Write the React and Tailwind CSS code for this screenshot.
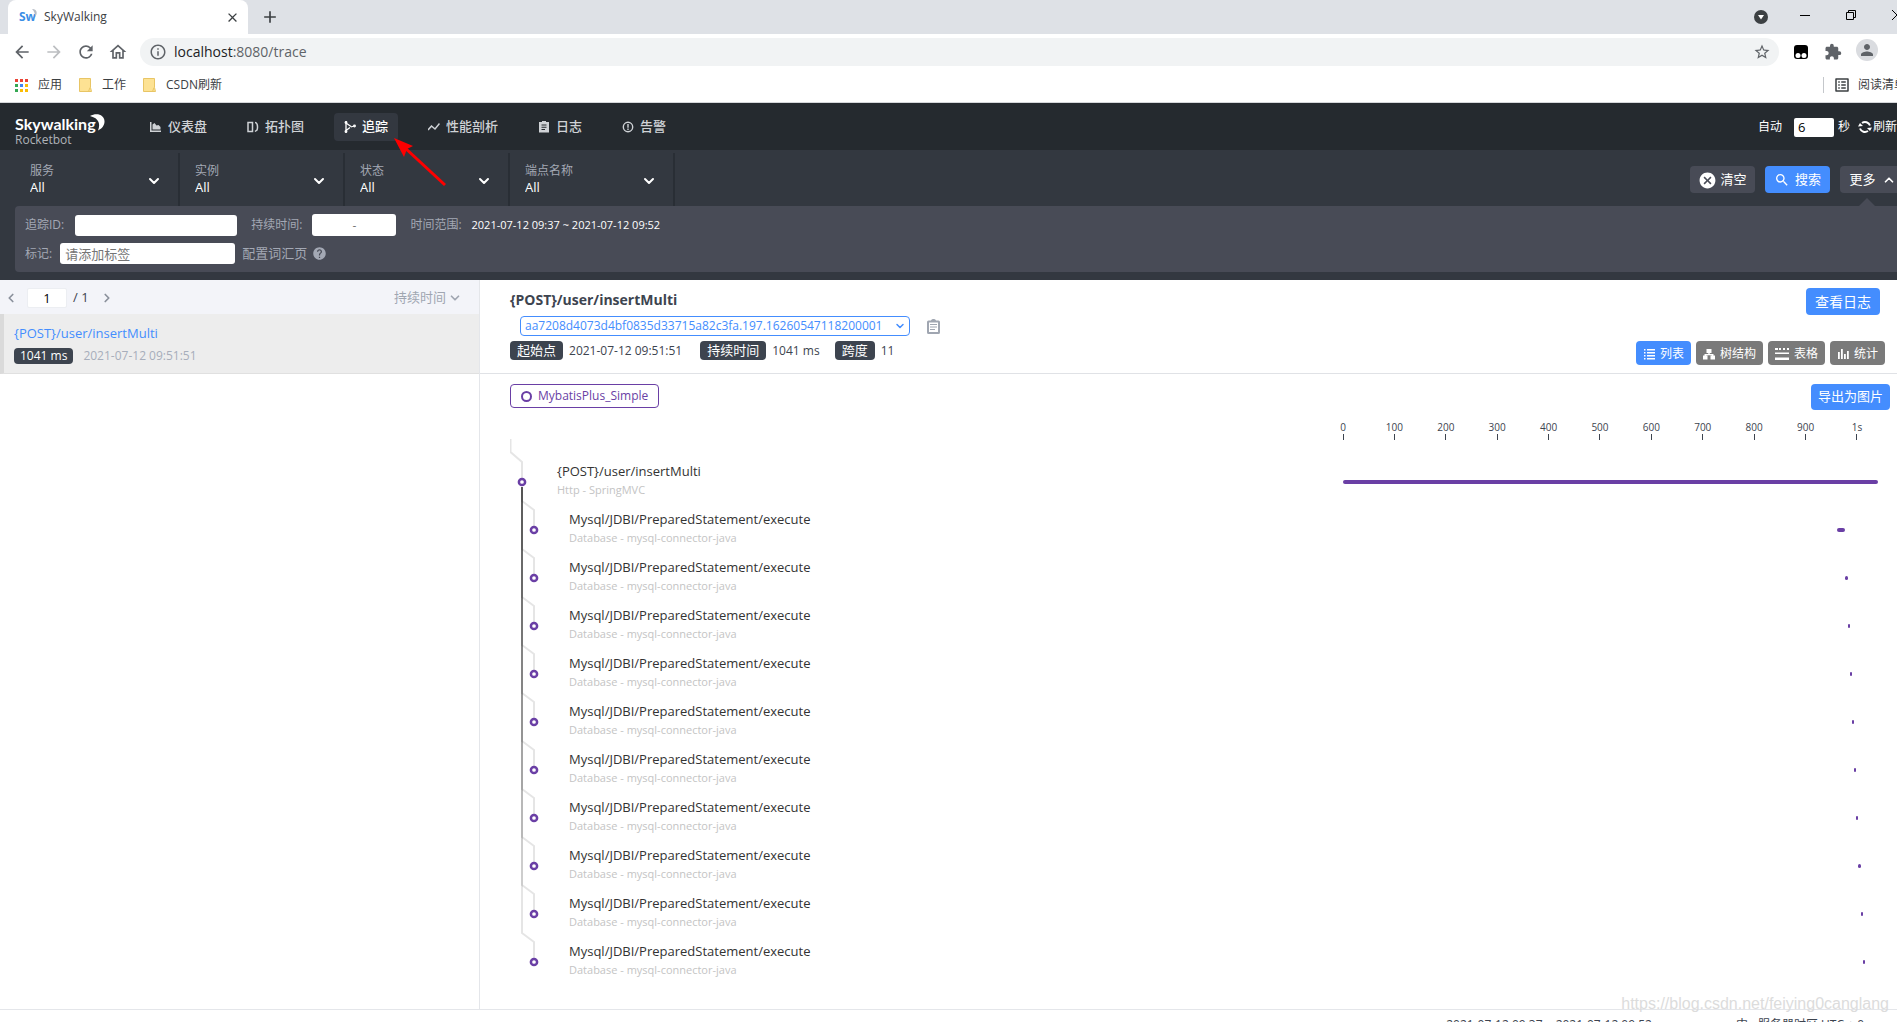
import { MdArrowBack, MdArrowForward, MdRefresh, MdOutlineHome, MdInfoOutline, MdStarBorder, MdExtension, MdPerson, MdAdd, MdClose, MdSearch, MdHelp, MdCancel, MdOutlineListAlt } from "react-icons/md";
import { ChevronDown, ChevronLeft, ChevronRight, ChevronUp } from "lucide-react";

const ROW = 48;
const TOTAL_MS = 1041;

const spans = [
  { name: "{POST}/user/insertMulti", layer: "Http - SpringMVC", start: 0, ms: 1041 },
  ...[[961, 15], [977, 5], [982, 5], [986, 5], [990, 5], [994, 5], [998, 5], [1003, 5], [1007, 5], [1011, 5]].map(([start, ms]) => ({
    name: "Mysql/JDBI/PreparedStatement/execute",
    layer: "Database - mysql-connector-java",
    start,
    ms,
    child: true,
  })),
];

const ticks = ["0", "100", "200", "300", "400", "500", "600", "700", "800", "900", "1s"];

const navItems = [
  { label: "仪表盘", icon: <path d="M0 1h1.500v8.500H11V11H0zM2.500 8.500V3.500l2-1.500 2 2.500 2-.5 2 2v2.500z" /> },
  { label: "拓扑图", icon: <path d="M1 1.500h4.500v9H1zM8 1.500c1 0 1.500.5 2 1.500.7 2 .7 4 0 6l-2 1.500" fill="none" stroke="currentColor" strokeWidth="1.500" /> },
  { label: "追踪", active: true, icon: <g fill="none" stroke="currentColor" strokeWidth="1.300"><path d="M2 0v12M2 2l5 3.500M7 6l3-1M2 9.500l4-3" /><circle cx="2" cy="1.500" r=".8" /><circle cx="2" cy="10.500" r=".8" /><circle cx="10.500" cy="5" r=".8" /></g> },
  { label: "性能剖析", icon: <path d="M0 9l3.500-4L7 8l4.500-5.500" fill="none" stroke="currentColor" strokeWidth="1.500" /> },
  { label: "日志", icon: <path fillRule="evenodd" d="M1 1H4V0h4v1h3v10.500H1zM3.500 3.500v1h5v-1zm0 2.300v1h5v-1zm0 2.300v1H7v-1z" /> },
  { label: "告警", icon: <g><circle cx="6" cy="6" r="4.700" fill="none" stroke="currentColor" strokeWidth="1.400" /><path d="M5.300 3h1.400v3.700H5.300zM5.300 7.500h1.400v1.400H5.300z" /></g> },
];

const views = [
  { label: "列表", active: true, icon: <path d="M1 1h1.500v1.500H1zM4 1h8v1.500H4zM1 4h1.500v1.500H1zM4 4h8v1.500H4zM1 7h1.500v1.500H1zM4 7h8v1.500H4zM1 10h1.500v1.500H1zM4 10h8v1.500H4z" /> },
  { label: "树结构", icon: <path d="M3.500 1h5v4H6.700v1h3.800v1.500H12V11.500H7.500v-4H9V7.200H3v.3h1.500v4H0v-4h1.500V6h3.800V5H3.500z" /> },
  { label: "表格", wide: true, icon: <path d="M0 0h3v2H0zM4 0h2v2H4zM8 0h2v2H8zM12 0h2v2h-2zM0 4.500h14V6H0zM0 9.500h14V12H0z" /> },
  { label: "统计", icon: <path d="M1 4h1.800v7H1zM4 1h1.800v10H4zM7 6h1.800v5H7zM10 3h1.800v8H10z" /> },
];

function Selector({ id, label }) {
  return (
    <div className="relative w-[165px] h-[53px] border-r-2 border-[#292e35] pl-[15px] pt-2 flex flex-col">
      <label htmlFor={id} className="text-xs leading-5 text-[#a3a8b4]">{label}</label>
      <select id={id} className="appearance-none w-full text-[13px] leading-3 h-3 text-white bg-transparent outline-none">
        <option>All</option>
      </select>
      <ChevronDown className="absolute right-4 top-5 pointer-events-none text-white" size={16} strokeWidth={3} />
    </div>
  );
}

function Badge({ children }) {
  return <span className="rounded bg-[#3d444f] text-white px-[7px] text-[13px] leading-[19px]">{children}</span>;
}

function Folder() {
  return (
    <svg width="13" height="14" viewBox="0 0 13 14">
      <path d="M.5.5h11v9l1 4h-12z" fill="#fde293" stroke="#e8c565" />
      <path d="M9.500 13.500l1.500-4" stroke="#e8c565" />
    </svg>
  );
}

function BrowserChrome() {
  return (
    <div className="text-[#3c4043]">
      <div className="h-[34px] bg-[#dee1e6] flex items-center pl-2">
        <div className="w-60 h-full bg-white rounded-t-lg flex items-center pl-[11px] pr-2">
          <span className="relative w-[17px] text-xs font-bold text-[#3a8ee6]">
            Sw
            <svg className="absolute left-[13px] top-0" width="5" height="8" viewBox="0 0 5 8"><path d="M0 0c5 0 6 4 3 8 0-4-1-6-3-8z" fill="#b7bdc6" /></svg>
          </span>
          <span className="ml-2 text-xs flex-1">SkyWalking</span>
          <button aria-label="关闭标签页"><MdClose size={15} /></button>
        </div>
        <button aria-label="新标签页" className="ml-3"><MdAdd size={20} /></button>
        <div className="ml-auto flex items-center text-black pr-[18px]">
          <svg width="14" height="14" viewBox="0 0 14 14"><circle cx="7" cy="7" r="7" fill="#3c4043" /><path d="M4 5h6L7 9.500z" fill="#fff" /></svg>
          <button aria-label="最小化" className="ml-8 mb-1"><svg width="11" height="11" viewBox="0 0 11 11"><path d="M0 5.500h10" stroke="currentColor" /></svg></button>
          <button aria-label="还原" className="ml-[35px] mb-1"><svg width="11" height="11" viewBox="0 0 11 11" fill="none" stroke="currentColor"><path d="M.5 2.500h7v7h-7zM2.500 2.500v-2h7v7h-2" /></svg></button>
          <button aria-label="关闭" className="ml-[35px] mb-1"><svg width="11" height="11" viewBox="0 0 11 11"><path d="M0 0l10 10M10 0L0 10" stroke="currentColor" /></svg></button>
        </div>
      </div>
      <div className="h-[34px] bg-white flex items-center pl-3 pt-[2px] text-[#5f6368]">
        <button aria-label="后退"><MdArrowBack size={20} /></button>
        <button aria-label="前进" className="ml-3 text-[#bcbec1]"><MdArrowForward size={20} /></button>
        <button aria-label="重新加载" className="ml-3"><MdRefresh size={20} /></button>
        <button aria-label="主页" className="ml-3"><MdOutlineHome size={20} /></button>
        <div className="ml-3 h-7 flex-1 rounded-full bg-[#f1f3f4] flex items-center pl-[9px] pr-2">
          <MdInfoOutline size={18} />
          <span className="ml-[7px] text-sm"><span className="text-[#202124]">localhost</span>:8080/trace</span>
          <button aria-label="收藏" className="ml-auto"><MdStarBorder size={18} /></button>
        </div>
        <svg className="ml-[15px]" width="14" height="14" viewBox="0 0 14 14"><rect width="14" height="14" rx="3" fill="#000" /><circle cx="4" cy="10.500" r="2.500" fill="#fff" /><circle cx="10" cy="10.500" r="2.500" fill="#fff" /></svg>
        <MdExtension className="ml-4" size={18} />
        <span className="ml-[14px] mr-[43px] mb-1 w-[22px] h-[22px] rounded-full bg-[#dadce0] flex items-center justify-center"><MdPerson size={18} /></span>
      </div>
      <div className="h-[35px] bg-white border-b border-[#d5d7da] flex items-center pl-[15px] text-xs">
        <svg width="13" height="13" viewBox="0 0 13 13">
          {["#ea4335", "#34a853", "#34a853"].map((c, i) => <rect key={i} x="0" y={i * 5} width="3" height="3" fill={c} />)}
          {["#ea4335", "#4285f4", "#fbbc05"].map((c, i) => <rect key={i} x="5" y={i * 5} width="3" height="3" fill={c} />)}
          {["#ea4335", "#fbbc05", "#fbbc05"].map((c, i) => <rect key={i} x="10" y={i * 5} width="3" height="3" fill={c} />)}
        </svg>
        <a href="#apps" className="ml-[10px]">应用</a>
        <a href="#work" className="ml-[17px] flex items-center gap-[10px]"><Folder />工作</a>
        <a href="#csdn" className="ml-[17px] flex items-center gap-[10px]"><Folder />CSDN刷新</a>
        <a href="#reading" className="ml-auto mr-[15px] h-4 border-l border-[#c4c7cb] pl-[9px] flex items-center gap-[7px] whitespace-nowrap">
          <MdOutlineListAlt size={18} />阅读清单
        </a>
      </div>
    </div>
  );
}

function Header() {
  return (
    <header className="h-[47px] bg-[#252a2f] flex items-center pl-[15px] pt-px text-[#cfd2d6]">
      <div className="relative w-[125px] pt-2">
        <div className="font-['Lato'] font-bold text-base leading-[18px] text-white">Skywalking</div>
        <svg className="absolute left-[75px] top-[7px]" width="15" height="17" viewBox="0 0 15 17"><path d="M0 2C7-2 15 1 14.500 8c-.3 4-3 7-6.500 8.500C11 9 8 4 0 2z" fill="#fff" /></svg>
        <div className="text-xs leading-[14px] text-[#b0b4b9]">Rocketbot</div>
      </div>
      <nav className="flex gap-5">
        {navItems.map((item) => (
          <a key={item.label} href="#nav" className={`h-7 px-[10px] rounded flex items-center gap-[6px] text-[13px] font-medium ${item.active ? "bg-[#333840] text-white" : ""}`}>
            <svg width="12" height="12" viewBox="0 0 12 12" fill="currentColor">{item.icon}</svg>
            {item.label}
          </a>
        ))}
      </nav>
      <div className="ml-auto mr-6 flex items-center text-xs text-white whitespace-nowrap">
        <label htmlFor="interval">自动</label>
        <input id="interval" defaultValue="6" className="ml-3 w-10 h-[19px] rounded-xs bg-white text-black text-[13px] px-1 outline-none" />
        <span className="ml-1">秒</span>
        <button className="ml-2 flex items-center gap-px">
          <svg width="14" height="14" viewBox="0 0 14 14" fill="none" stroke="currentColor" strokeWidth="2">
            <path d="M12 5.500A5.300 5.300 0 0 0 4 3M2 8.500A5.300 5.300 0 0 0 10 11" />
            <path d="M0 6.500l2-3.500 3 3zM14 7.500l-2 3.500-3-3z" fill="currentColor" stroke="none" />
          </svg>
          刷新
        </button>
      </div>
    </header>
  );
}

function Filters() {
  const label = "text-[#a3a8b4]";
  return (
    <section className="bg-[#333840] pt-[3px] pb-2 text-xs">
      <div className="flex items-start pl-[15px]">
        <Selector id="service" label="服务" />
        <Selector id="instance" label="实例" />
        <Selector id="status" label="状态" />
        <Selector id="endpoint" label="端点名称" />
        <div className="ml-auto mr-4 mt-[13px] flex gap-[10px] text-[13px] text-white">
          <button className="w-[65px] h-[27px] pt-px rounded bg-[#484b56] flex items-center justify-center gap-[3px]"><MdCancel size={19} />清空</button>
          <button className="w-[65px] h-[27px] pt-px rounded bg-[#448dfe] flex items-center justify-center gap-[5px]"><MdSearch size={16} />搜索</button>
          <button className="relative w-[65px] h-[27px] pt-px rounded bg-[#484b56] flex items-center justify-center gap-[6px]">
            更多<ChevronUp size={14} strokeWidth={3} />
            <svg className="absolute left-[19px] top-8" width="16" height="8" viewBox="0 0 16 8"><path d="M0 8l8-8 8 8z" fill="#484b56" /></svg>
          </button>
        </div>
      </div>
      <div className="ml-[15px] mr-4 rounded-sm bg-[#484b56] h-[66px] pt-2 px-[10px]">
        <div className="flex items-center h-[22px]">
          <label htmlFor="traceId" className={label}>追踪ID:</label>
          <input id="traceId" className="ml-[11px] w-[162px] h-[21px] rounded-[3px] bg-white outline-none px-1" />
          <label htmlFor="duration" className={`ml-[14px] ${label}`}>持续时间:</label>
          <input id="duration" defaultValue="-" className="ml-[10px] w-[84px] h-[22px] rounded-[3px] bg-white text-[#777] text-center outline-none" />
          <span className={`ml-[14px] ${label}`}>时间范围:</span>
          <span className="ml-[10px] text-[11px] text-white">2021-07-12 09:37 ~ 2021-07-12 09:52</span>
        </div>
        <div className="flex items-center h-[21px] mt-[7px]">
          <label htmlFor="tags" className={label}>标记:</label>
          <input id="tags" placeholder="请添加标签" className="ml-2 w-[175px] h-[21px] rounded-[3px] bg-white text-[13px] placeholder:text-[#757575] outline-none px-[5px]" />
          <a href="#vocab" className={`ml-[7px] flex items-center gap-[5px] text-[13px] ${label}`}>配置词汇页<MdHelp size={15} /></a>
        </div>
      </div>
    </section>
  );
}

function TraceList() {
  return (
    <aside className="w-[480px] shrink-0 border-r border-[#e4e6ea]">
      <div className="h-[34px] bg-[#f3f4f9] flex items-center px-1 pt-px text-[13px]">
        <button aria-label="上一页"><ChevronLeft size={14} strokeWidth={3} className="text-[#8b919c]" /></button>
        <input aria-label="页码" defaultValue="1" className="ml-[9px] w-10 h-5 rounded-xs border border-[#eceef2] bg-white text-center outline-none" />
        <span className="ml-[6px] text-[#3d444f]">/ 1</span>
        <button aria-label="下一页" className="ml-[11px]"><ChevronRight size={14} strokeWidth={3} className="text-[#8b919c]" /></button>
        <button className="ml-auto mr-[13px] flex items-center gap-[2px] text-[#a0a6b1]">持续时间<ChevronDown size={14} strokeWidth={3} /></button>
      </div>
      <div className="h-[60px] bg-[#ededed] border-l-4 border-l-[#dadada] border-b border-b-[#e0e0e0] pl-[10px] pt-[9px]">
        <a href="#trace" className="block text-[13px] leading-5 text-[#448dfe]">{"{POST}/user/insertMulti"}</a>
        <div className="mt-[5px] flex items-center text-xs">
          <span className="rounded bg-[#3d444f] text-white px-[6px] leading-4">1041 ms</span>
          <span className="ml-[10px] leading-4 text-[#a7aebb]">2021-07-12 09:51:51</span>
        </div>
      </div>
    </aside>
  );
}

function SpanTree() {
  // every child draws its own line down from the root, so the shared trunk gets darker upwards
  return (
    <svg className="absolute left-0 top-0 pointer-events-none" width="40" height={ROW * spans.length + 20} fill="none">
      {spans.map((s, i) => {
        const y = 43 + i * ROW;
        return s.child
          ? <path key={i} d={`M12 48V${y - 29}L24 ${y - 20}V${y - 4}`} stroke="#000" strokeOpacity=".1" strokeWidth="2" />
          : <path key={i} d="M0.500 0V13L12 23V39" stroke="#000" strokeOpacity=".1" strokeWidth="2" />;
      })}
      {spans.map((s, i) => (
        <circle key={i} cx={s.child ? 24 : 12} cy={43 + i * ROW} r="3.100" fill="#fff" stroke="#6a3fa5" strokeWidth="2.500" />
      ))}
    </svg>
  );
}

function TraceDetail() {
  return (
    <main className="flex-1 min-w-0">
      <div className="h-[94px] border-b border-[#e0e2e6] pl-[30px] pt-2 flex justify-between">
        <div>
          <h5 className="text-sm leading-6 font-bold text-[#3d444f]">{"{POST}/user/insertMulti"}</h5>
          <div className="ml-[10px] mt-1 h-5 flex items-center">
            <div className="relative flex">
              <select aria-label="追踪ID" className="appearance-none w-[390px] h-5 rounded border border-[#448dfe] text-[#448dfe] text-xs pl-1 bg-white outline-none">
                <option>aa7208d4073d4bf0835d33715a82c3fa.197.16260547118200001</option>
              </select>
              <ChevronDown className="absolute right-1 top-1 pointer-events-none text-[#448dfe]" size={12} strokeWidth={3} />
            </div>
            <button aria-label="复制" className="ml-[17px] text-[#a0a6b1]">
              <svg width="13" height="15" viewBox="0 0 13 15"><path fill="currentColor" fillRule="evenodd" d="M1.500 1.500H4C4.500-.5 8.500-.5 9 1.500h2.500A1.500 1.500 0 0 1 13 3v10.500a1.500 1.500 0 0 1-1.500 1.500h-10A1.500 1.500 0 0 1 0 13.500V3a1.500 1.500 0 0 1 1.500-1.500zM2 3.500v9.500h9V3.500zM3 5h7v1H3zm0 2.500h7v1H3zM3 10h5v1H3z" /></svg>
            </button>
          </div>
          <div className="mt-[5px] flex items-center text-xs text-[#3d444f]">
            <Badge>起始点</Badge><span className="ml-[6px] mr-[18px]">2021-07-12 09:51:51</span>
            <Badge>持续时间</Badge><span className="ml-[6px] mr-[15px]">1041 ms</span>
            <Badge>跨度</Badge><span className="ml-[6px]">11</span>
          </div>
        </div>
        <div className="mr-9 flex flex-col items-end">
          <button className="mr-[5px] w-[74px] h-[27px] rounded bg-[#448dfe] text-white text-sm">查看日志</button>
          <div className="mt-[26px] flex gap-[5px] text-xs text-white">
            {views.map((v) => (
              <button key={v.label} className={`h-6 pt-px px-[7px] rounded flex items-center gap-[5px] ${v.active ? "bg-[#448dfe]" : "bg-[#7a7a7a]"}`}>
                <svg width={v.wide ? 14 : 12} height="12" viewBox={v.wide ? "0 0 14 12" : "0 0 12 12"} fill="currentColor">{v.icon}</svg>
                {v.label}
              </button>
            ))}
          </div>
        </div>
      </div>

      <div className="pl-[30px] pr-[31px] pt-[10px] flex justify-between items-start">
        <button className="h-6 rounded border border-[#6a3fa5] text-[#6a3fa5] px-[10px] text-xs flex items-center gap-[6px]">
          <span className="w-[11px] h-[11px] rounded-full border-2 border-[#6a3fa5]" />MybatisPlus_Simple
        </button>
        <button className="h-[26px] rounded bg-[#448dfe] text-white px-[7px] text-[13px]">导出为图片</button>
      </div>

      <div className="pl-[30px] pr-[43px] mt-[10px]">
        <div className="ml-auto w-[535px] h-[19px] relative text-[10px] leading-[14px] text-[#3d444f]">
          {ticks.map((t, i) => (
            <div key={t} className="absolute top-0 w-10 -ml-5 flex flex-col items-center" style={{ left: `${(i * 10000) / TOTAL_MS}%` }}>
              {t}
              <span className="w-px h-[6px] bg-[#3d444f]" />
            </div>
          ))}
        </div>
        <div className="relative">
          <SpanTree />
          <div className="pt-[19px]">
            {spans.map((s, i) => (
              <div key={i} className="h-12 flex">
                <div className={`flex-1 pt-[3px] ${s.child ? "pl-[59px]" : "pl-[47px]"}`}>
                  <div className="text-[13px] leading-5 text-[#333]">{s.name}</div>
                  <div className="text-[11px] leading-[18px] text-[#c4c4c4]">{s.layer}</div>
                </div>
                <div className="w-[535px] pt-[22px]">
                  <div className="h-1 rounded-full bg-[#6a3fa5]" style={{ width: `${(s.ms * 100) / TOTAL_MS}%`, marginLeft: `${(s.start * 100) / TOTAL_MS}%` }} />
                </div>
              </div>
            ))}
          </div>
        </div>
      </div>
    </main>
  );
}

export default function App() {
  return (
    <div className="relative h-screen overflow-hidden bg-white font-['Open_Sans','Noto_Sans_CJK_SC',sans-serif]">
      <div className="-mr-6 h-[calc(100vh+18px)] flex flex-col">
        <BrowserChrome />
        <Header />
        <Filters />
        <div className="flex-1 min-h-0 flex">
          <TraceList />
          <TraceDetail />
        </div>
        <footer className="h-[31px] shrink-0 border-t border-[#e4e6ea] flex items-center justify-end pr-[57px] text-xs text-[#3d444f]">
          <span>2021-07-12 09:37 ~ 2021-07-12 09:52</span>
          <button className="ml-[84px]">中</button>
          <span className="ml-[10px]">服务器时区 UTC + 0</span>
        </footer>
      </div>
      <svg className="absolute left-[394px] top-[138px] pointer-events-none" width="54" height="50" viewBox="0 0 54 50">
        <path d="M10 9L51 47" stroke="#fe0000" strokeWidth="3" />
        <path d="M0 0l19 8-6 3-3 8z" fill="#fe0000" />
      </svg>
      <div className="absolute right-2 bottom-2 font-['Liberation_Sans'] text-base leading-5 text-[#dcdcdc] pointer-events-none">https://blog.csdn.net/feiying0canglang</div>
    </div>
  );
}
